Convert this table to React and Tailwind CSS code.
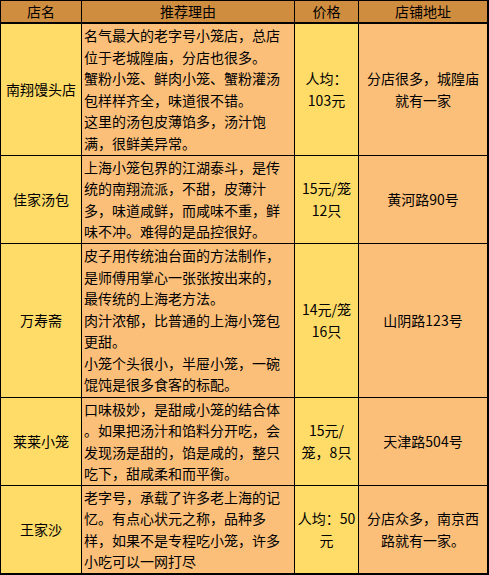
const shops = [
  {
    name: '南翔馒头店',
    reason: [
      '名气最大的老字号小笼店，总店',
      '位于老城隍庙，分店也很多。',
      '蟹粉小笼、鲜肉小笼、蟹粉灌汤',
      '包样样齐全，味道很不错。',
      '这里的汤包皮薄馅多，汤汁饱',
      '满，很鲜美异常。',
    ],
    price: ['人均：', '103元'],
    address: ['分店很多，城隍庙', '就有一家'],
  },
  {
    name: '佳家汤包',
    reason: [
      '上海小笼包界的江湖泰斗，是传',
      '统的南翔流派，不甜，皮薄汁',
      '多，味道咸鲜，而咸味不重，鲜',
      '味不冲。难得的是品控很好。',
    ],
    price: ['15元/笼', '12只'],
    address: ['黄河路90号'],
  },
  {
    name: '万寿斋',
    reason: [
      '皮子用传统油台面的方法制作，',
      '是师傅用掌心一张张按出来的，',
      '最传统的上海老方法。',
      '肉汁浓郁，比普通的上海小笼包',
      '更甜。',
      '小笼个头很小，半屉小笼，一碗',
      '馄饨是很多食客的标配。',
    ],
    price: ['14元/笼', '16只'],
    address: ['山阴路123号'],
  },
  {
    name: '莱莱小笼',
    reason: [
      '口味极妙，是甜咸小笼的结合体',
      '。如果把汤汁和馅料分开吃，会',
      '发现汤是甜的，馅是咸的，整只',
      '吃下，甜咸柔和而平衡。',
    ],
    price: ['15元/', '笼，8只'],
    address: ['天津路504号'],
  },
  {
    name: '王家沙',
    reason: [
      '老字号，承载了许多老上海的记',
      '忆。有点心状元之称，品种多',
      '样，如果不是专程吃小笼，许多',
      '小吃可以一网打尽',
    ],
    price: ['人均：50', '元'],
    address: ['分店众多，南京西', '路就有一家。'],
  },
];

const Lines = ({ lines }) => lines.map((line) => <div key={line}>{line}</div>);

export default function App() {
  return (
    <div className="w-[489px] h-[575px] bg-black pt-[1px] pl-[1px] pr-[2px] pb-[2px] text-[14px] leading-[21.5px] text-black [font-family:'Noto_Sans_CJK_SC','Noto_Sans',sans-serif]">
      <div className="grid h-full grid-cols-[80px_212px_63px_128px] grid-rows-[22px_131px_87px_153px_87px_87px] gap-[1px]">
        {['店名', '推荐理由', '价格', '店铺地址'].map((h) => (
          <div key={h} className="mb-[1px] flex items-center justify-center bg-[#cf8d40] leading-[21px]">
            {h}
          </div>
        ))}
        {shops.map((s) => [
          <div key={s.name + 'n'} className="flex items-center justify-center bg-[#ffdc68]">
            {s.name}
          </div>,
          <div key={s.name + 'r'} className="flex flex-col justify-center bg-[#fbbf7a] pl-[2px]">
            <Lines lines={s.reason} />
          </div>,
          <div key={s.name + 'p'} className="flex flex-col items-center justify-center bg-[#ffdc68] text-center">
            <Lines lines={s.price} />
          </div>,
          <div key={s.name + 'a'} className="flex flex-col items-center justify-center bg-[#fbbf7a] text-center">
            <Lines lines={s.address} />
          </div>,
        ])}
      </div>
    </div>
  );
}
